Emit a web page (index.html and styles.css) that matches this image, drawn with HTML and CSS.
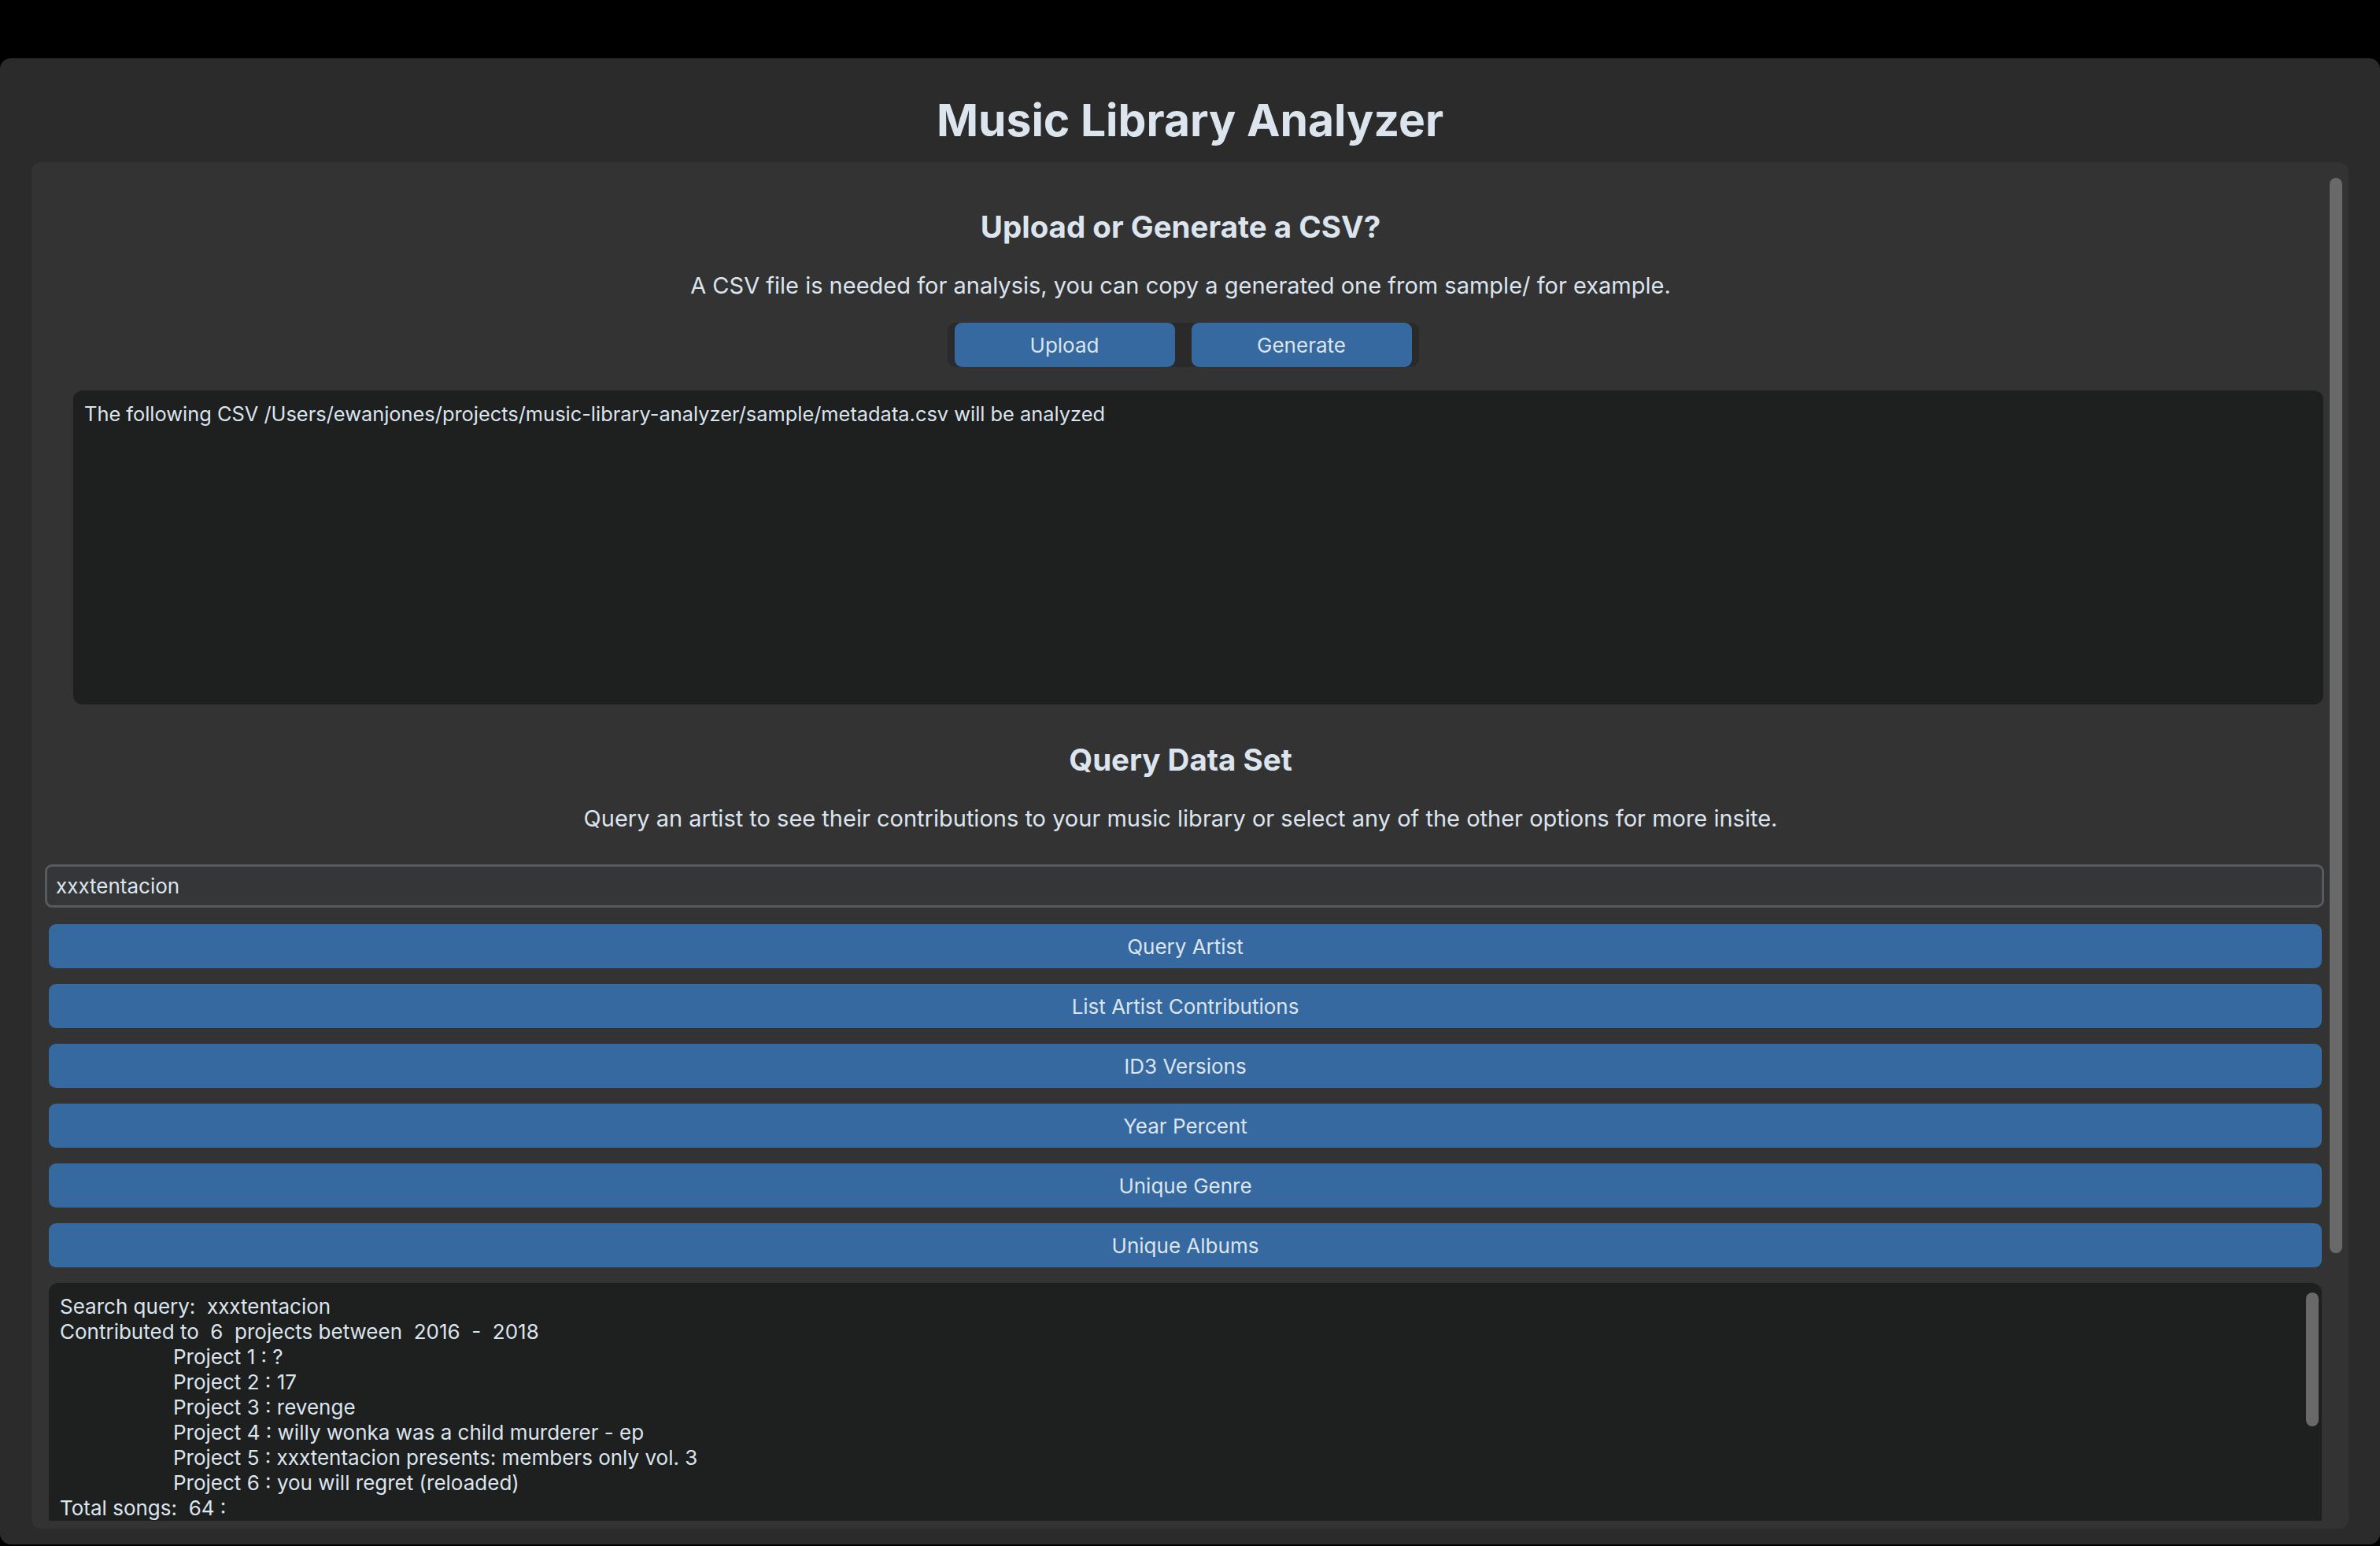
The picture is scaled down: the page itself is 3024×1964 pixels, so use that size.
FILE: index.html
```html
<!DOCTYPE html>
<html lang="en">
<head>
<meta charset="utf-8">
<title>Music Library Analyzer</title>
<link rel="stylesheet" href="styles.css">
</head>
<body>
<div class="window">
  <h1 class="app-title">Music Library Analyzer</h1>
  <div class="panel">
    <div class="content">
      <h2 class="section-title first">Upload or Generate a CSV?</h2>
      <p class="section-sub first-sub">A CSV file is needed for analysis, you can copy a generated one from sample/ for example.</p>
      <div class="segmented">
        <button class="btn seg-btn">Upload</button>
        <button class="btn seg-btn">Generate</button>
      </div>
      <div class="textbox csv-box">The following CSV /Users/ewanjones/projects/music-library-analyzer/sample/metadata.csv will be analyzed</div>
      <h2 class="section-title second">Query Data Set</h2>
      <p class="section-sub second-sub">Query an artist to see their contributions to your music library or select any of the other options for more insite.</p>
      <div class="entry">xxxtentacion</div>
      <div class="actions">
        <button class="btn wide-btn">Query Artist</button>
        <button class="btn wide-btn">List Artist Contributions</button>
        <button class="btn wide-btn">ID3 Versions</button>
        <button class="btn wide-btn">Year Percent</button>
        <button class="btn wide-btn">Unique Genre</button>
        <button class="btn wide-btn">Unique Albums</button>
      </div>
      <div class="textbox output-box">
        <div class="out-lines">
          <div class="line">Search query:&nbsp; xxxtentacion</div>
          <div class="line">Contributed to&nbsp; 6&nbsp; projects between&nbsp; 2016&nbsp; -&nbsp; 2018</div>
          <div class="line indent">Project 1 : ?</div>
          <div class="line indent">Project 2 : 17</div>
          <div class="line indent">Project 3 : revenge</div>
          <div class="line indent">Project 4 : willy wonka was a child murderer - ep</div>
          <div class="line indent">Project 5 : xxxtentacion presents: members only vol. 3</div>
          <div class="line indent">Project 6 : you will regret (reloaded)</div>
          <div class="line">Total songs:&nbsp; 64 :</div>
          <div class="line">&nbsp;</div>
        </div>
        <div class="inner-scroll"></div>
      </div>
    </div>
    <div class="vscroll"><div class="thumb"></div></div>
  </div>
</div>
</body>
</html>
```

FILE: styles.css
```css
* { box-sizing: border-box; }

html, body {
  margin: 0;
  padding: 0;
  background: #000000;
  font-family: Inter, "Noto Sans", "Liberation Sans", sans-serif;
  color: #dce4ee;
}

.window {
  margin-top: 74px;
  height: 1888px;
  background: #2b2b2b;
  border-radius: 14px;
  padding: 0 40px;
  display: flex;
  flex-direction: column;
  overflow: hidden;
}

.app-title {
  margin: 44px 0 18px 0;
  font-size: 57px;
  line-height: 70px;
  font-weight: 700;
  text-align: center;
  color: #dce4ee;
  flex-shrink: 0;
}

.panel {
  height: 1736px;
  flex-shrink: 0;
  background: #333333;
  border-radius: 12px;
  display: flex;
  flex-direction: row;
  padding: 10px 0;
}

.content {
  flex: 1;
  display: flex;
  flex-direction: column;
  overflow: hidden;
}

.content > * { flex-shrink: 0; }

.section-title {
  margin: 0;
  font-size: 38.5px;
  line-height: 48px;
  font-weight: 700;
  text-align: center;
}
.section-title.first { margin-top: 48px; }
.section-title.second { margin-top: 46px; }

.section-sub {
  margin: 0;
  font-size: 29px;
  line-height: 34px;
  text-align: center;
}
.first-sub { margin-top: 34px; }
.second-sub { margin-top: 34px; }

.segmented {
  align-self: center;
  margin-top: 30px;
  margin-left: 6px;
  display: flex;
  gap: 21px;
  padding: 0 9px;
  height: 56px;
  background: #2a2a2a;
  border-radius: 10px;
}

.btn {
  font-family: inherit;
  font-size: 26px;
  color: #dce4ee;
  background: #3669a0;
  border: none;
  border-radius: 9px;
  padding: 0;
  margin: 0;
}

.seg-btn {
  width: 280px;
  height: 56px;
}

.textbox {
  background: #1e1f1f;
  border-radius: 12px;
  font-size: 26px;
  line-height: 32px;
}

.csv-box {
  margin: 30px 8px 0 53px;
  height: 399px;
  padding: 14px 14px;
  font-size: 25.4px;
}

.entry {
  margin: 41px 7px 0 17px;
  height: 55px;
  border: 3px solid #565b5e;
  border-radius: 9px;
  background: #343638;
  font-size: 26px;
  line-height: 49px;
  padding: 0 11px;
}

.actions {
  margin: 21px 10px 0 22px;
  display: flex;
  flex-direction: column;
  gap: 20px;
}

.wide-btn {
  height: 56px;
  width: 100%;
}

.output-box {
  margin: 20px 10px 0 22px;
  height: 420px;
  display: flex;
  flex-direction: row;
  border-radius: 12px 12px 0 0;
}

.out-lines {
  flex: 1;
  padding: 14px 14px;
}

.line { white-space: pre; }
.indent { padding-left: 144px; }

.inner-scroll {
  width: 16px;
  height: 170px;
  margin: 12px 4px 0 0;
  background: #696969;
  border-radius: 8px;
}

.vscroll {
  width: 16px;
  margin: 10px 8px 0 0;
}

.thumb {
  height: 1366px;
  background: #696969;
  border-radius: 8px;
}
```
